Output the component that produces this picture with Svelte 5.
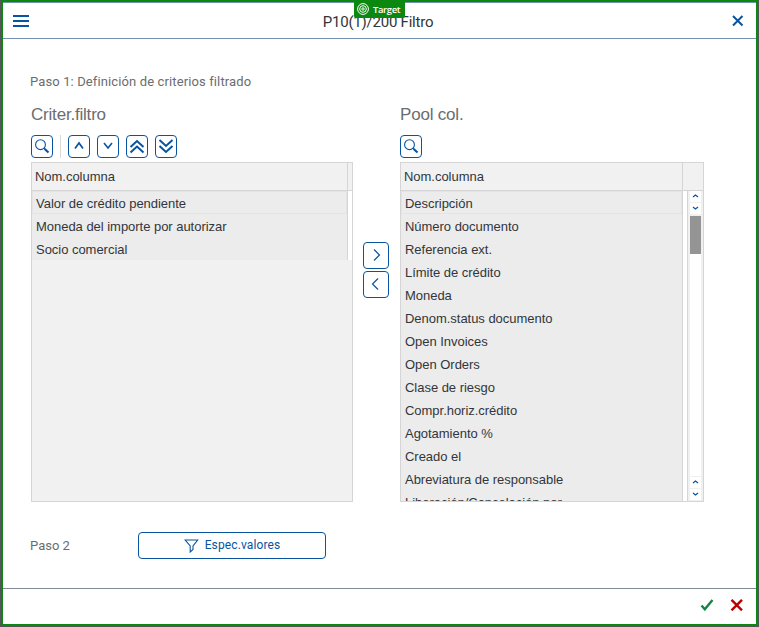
<script>
  const selected = ['Valor de crédito pendiente', 'Moneda del importe por autorizar', 'Socio comercial'];
  const pool = [
    'Descripción', 'Número documento', 'Referencia ext.', 'Límite de crédito', 'Moneda',
    'Denom.status documento', 'Open Invoices', 'Open Orders', 'Clase de riesgo',
    'Compr.horiz.crédito', 'Agotamiento %', 'Creado el', 'Abreviatura de responsable',
    'Liberación/Cancelación por'
  ];
  const moves = [
    { label: 'Subir', d: 'M7 13.5 11 8 15 13.5', w: 1.7 },
    { label: 'Bajar', d: 'M7 8 11 13 15 8', w: 1.6 },
    { label: 'Al principio', d: 'M4.5 12 11 6 17.5 12M4.5 17.5 11 11.5 17.5 17.5', w: 2 },
    { label: 'Al final', d: 'M4.5 5 11 11 17.5 5M4.5 11 11 17 17.5 11', w: 2 }
  ];
</script>

{#snippet search()}
  <button class="tool" aria-label="Buscar">
    <svg width="22" height="23" viewBox="0 0 22 23"><circle cx="9.5" cy="9.7" r="4.9" stroke-width="1.1" /><path d="m13 13.2 1.2 1.2" stroke-width="1.3" /><path d="m13.700 13.900 3.800 3.600" stroke-width="2.100" /></svg>
  </button>
{/snippet}

{#snippet arrows()}
  <i><svg width="11" height="11"><path d="M3 6 5.5 4 8 6" /></svg></i>
  <i><svg width="11" height="11"><path d="M3 4 5.5 6 8 4" /></svg></i>
{/snippet}

<div class="frame">
  <main class="dialog">
    <header>
      <svg class="burger" width="16" height="12"><path d="M0 1h16M0 6h16M0 11h16" stroke-width="2" /></svg>
      <h1>P10(1)/200 Filtro</h1>
      <svg class="close" width="12" height="12"><path d="m1 1 9.5 9.5M10.5 1 1 10.5" stroke-width="2" /></svg>
      <div class="target">
        <svg width="12" height="12"><circle cx="6" cy="6" r="5.4" /><circle cx="6" cy="6" r="3.3" /><circle cx="6" cy="6" r="1.2" /></svg>
        <span>Target</span>
      </div>
    </header>

    <section class="content">
      <div class="step one"><span>Paso 1: Definición de criterios filtrado</span></div>
      <div class="columns">
        <div class="left">
          <h2>Criter.filtro</h2>
          <div class="toolbar">
            {@render search()}
            <span class="sep"></span>
            {#each moves as m}
              <button class="tool" aria-label={m.label}><svg width="22" height="23" viewBox="0 0 22 23"><path d={m.d} stroke-width={m.w} /></svg></button>
            {/each}
          </div>
          <div class="table">
            <div class="thead"><span>Nom.columna</span></div>
            <div class="short">
              <div class="rows">
                {#each selected as name}<div class="row"><span>{name}</span></div>{/each}
              </div>
            </div>
          </div>
        </div>
        <div class="transfer">
          <button aria-label="Quitar"><svg width="26" height="27"><path d="M11 7.5 16.5 13 11 18.5" stroke-width="1.2" /></svg></button>
          <button aria-label="Añadir"><svg width="26" height="27"><path d="M15 7.5 9.5 13 15 18.5" stroke-width="1.2" /></svg></button>
        </div>
        <div class="right">
          <h2>Pool col.</h2>
          <div class="toolbar">{@render search()}</div>
          <div class="table">
            <div class="thead"><span>Nom.columna</span></div>
            <div class="long">
              <div class="rows">
                {#each pool as name}<div class="row"><span>{name}</span></div>{/each}
              </div>
              <div class="scroll">
                {@render arrows()}
                <div class="track"><div class="thumb"></div></div>
                {@render arrows()}
              </div>
            </div>
          </div>
        </div>
      </div>
      <div class="step two">
        <span class="label">Paso 2</span>
        <button class="values">
          <svg width="15" height="14"><path d="M1.2 1h12.5L9 7v3.5L6.2 13V7z" stroke-width="1.1" /></svg>
          <span>Espec.valores</span>
        </button>
      </div>
    </section>

    <footer>
      <svg width="14" height="12"><path d="m1.5 6.5 3.3 3.8L12.5 1" stroke="#188346" stroke-width="2.4" /></svg>
      <svg width="14" height="12"><path d="m1.5 .8 10.5 10.5M12 .8 1.5 11.3" stroke="#b00" stroke-width="2.4" /></svg>
    </footer>
  </main>
</div>

<style>
  * { box-sizing: border-box; }
  svg { display: block; fill: none; stroke: #0854a0; flex: none; }
  button { background: #fff; border: 1px solid #0854a0; border-radius: 4px; padding: 0; display: flex; align-items: center; justify-content: center; flex: none; }
  span { white-space: nowrap; }
  .frame { width: 759px; height: 627px; background: #56545a; padding: 0 1px 1px; }
  .dialog { height: 626px; border: 2px solid #0b880f; background: #fff; display: flex; flex-direction: column; }
  header { position: relative; height: 37px; border-top: 1px solid #7591b0; border-bottom: 1px solid #7591b0; display: flex; align-items: center; padding: 1px 12px 0 10px; flex: none; }
  h1 { flex: 1; margin: 0; padding: 2px 5px 0 0; text-align: center; font: 400 15px/20px Roboto, sans-serif; letter-spacing: -.22px; color: #32363a; }
  .target { position: absolute; left: 351px; top: -3px; width: 51px; height: 18px; padding-left: 3px; display: flex; align-items: center; gap: 4px; background: #0b880f; color: #fff; border-radius: 0 0 2px 2px; font: 600 9.5px/16px "Open Sans", sans-serif; letter-spacing: -.4px; }
  .target span { padding-top: 1px; }
  .target svg { stroke: #fff; stroke-width: 1; }
  .content { height: 549px; padding: 34px 0 0 27px; flex: none; }
  .step { font: 400 13px/18px Roboto, sans-serif; color: #6a6d70; }
  .one { letter-spacing: .12px; }
  .columns { display: flex; margin-left: 1px; padding-top: 12px; }
  .left { width: 322px; }
  .right { width: 304px; }
  h2 { margin: 0; font: 400 17px/24px "Liberation Sans", sans-serif; letter-spacing: -.2px; color: #6a6d70; }
  .toolbar { display: flex; gap: 7px; margin-top: 8px; margin-bottom: 4px; height: 23px; }
  .tool { width: 22px; height: 23px; }
  .sep { width: 1px; height: 23px; background: #d9d9d9; }
  .table { height: 340px; border: 1px solid #d5d5d5; background: #f1f1f1; display: flex; flex-direction: column; font: 13px/23px "Liberation Sans", sans-serif; color: #32363a; letter-spacing: -.03px; }
  .thead { height: 28px; flex: none; border-bottom: 1px solid #d5d5d5; padding: 2px 0 0 3px; background: linear-gradient(#d5d5d5, #d5d5d5) right 4px top / 1px 100% no-repeat; }
  .right .thead { background-position: right 20px top; }
  .rows { background: #ececec; border-right: 1px solid #d5d5d5; flex: 1; }
  .row { height: 23px; padding: 1px 0 0 4px; }
  .row:first-child { box-shadow: inset 0 0 0 1px #e4e4e4; }
  .short { display: flex; background: #fff; height: 69px; padding-right: 4px; }
  .long { display: flex; height: 310px; overflow: hidden; background: #fff; }
  .long .rows { overflow: hidden; }
  .scroll { margin-left: 4px; width: 16px; border-left: 1px solid #d5d5d5; background: #f0f0f0; padding: 0 2px 1px; display: flex; flex-direction: column; gap: 1px; }
  .scroll i { height: 11px; width: 11px; background: #fff; display: block; }
  .scroll svg { stroke-width: 1.2; }
  .track { flex: 1; background: #fff; }
  .thumb { height: 39px; background: #949494; border-top: 1px solid #f0f0f0; }
  .transfer { width: 47px; padding: 139px 0 0 10px; display: flex; flex-direction: column; gap: 2px; }
  .transfer button { width: 26px; height: 27px; }
  .two { display: flex; align-items: center; margin-top: 30px; }
  .label { width: 108px; }
  .values { width: 188px; height: 27px; gap: 6px; color: #0854a0; font: 400 12px/20px Roboto, sans-serif; letter-spacing: .12px; }
  .values span { padding-bottom: 1px; }
  footer { height: 36px; border-top: 1px solid #7f8b9b; display: flex; justify-content: flex-end; align-items: center; gap: 16px; padding: 0 12px 3px 0; }
</style>
